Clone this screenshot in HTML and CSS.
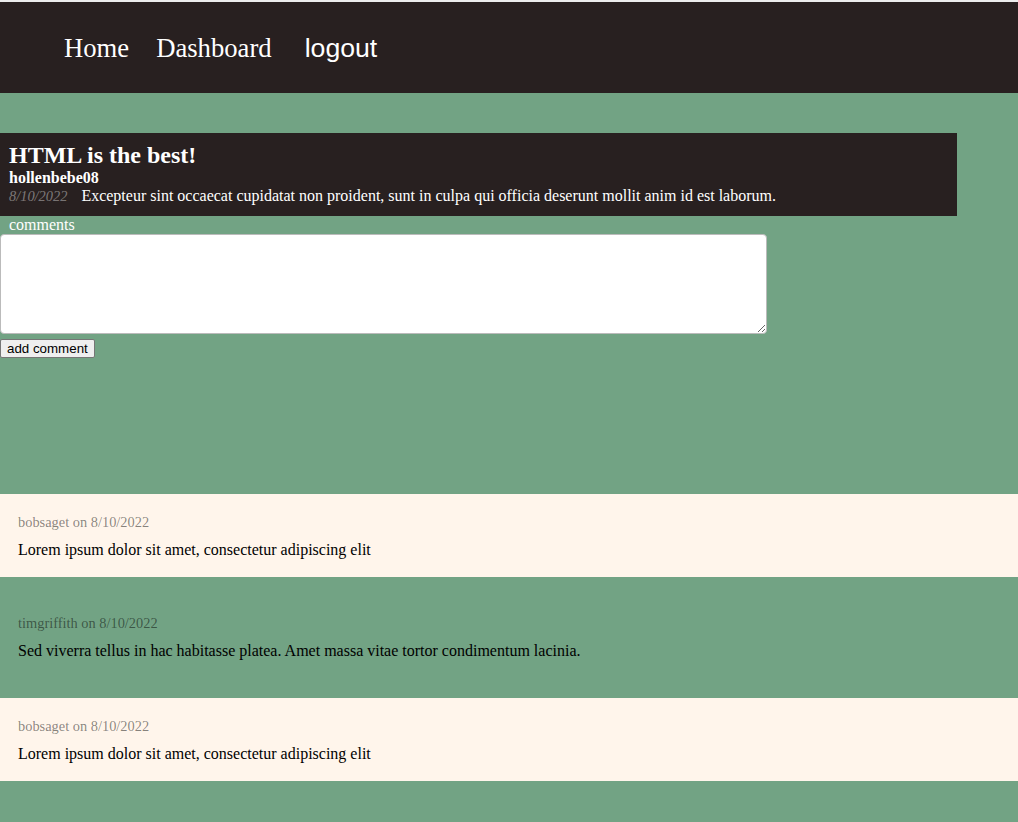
FILE: index.html
```html
<!DOCTYPE html>
<html>
<head>
<meta charset="utf-8">
<title>HTML is the best!</title>
<link rel="stylesheet" href="styles.css">
</head>
<body>
<header class="topbar">
  <nav class="nav">
    <a class="nav-link" href="#">Home</a>
    <a class="nav-link" href="#">Dashboard</a>
    <a class="nav-link nav-logout" href="#">logout</a>
  </nav>
</header>
<main class="main">
  <article class="post">
    <h2 class="post-title">HTML is the best!</h2>
    <div class="post-author">hollenbebe08</div>
    <div class="post-body"><span class="post-date">8/10/2022</span><span class="post-text">Excepteur sint occaecat cupidatat non proident, sunt in culpa qui officia deserunt mollit anim id est laborum.</span></div>
  </article>
  <form class="comment-form">
    <label class="comment-label" for="c">comments</label>
    <textarea class="comment-input" id="c"></textarea>
    <button class="comment-btn" type="button">add comment</button>
  </form>
  <section class="comments">
    <div class="comment">
      <p class="comment-meta">bobsaget on 8/10/2022</p>
      <p class="comment-text">Lorem ipsum dolor sit amet, consectetur adipiscing elit</p>
    </div>
    <div class="comment comment-alt">
      <p class="comment-meta">timgriffith on 8/10/2022</p>
      <p class="comment-text">Sed viverra tellus in hac habitasse platea. Amet massa vitae tortor condimentum lacinia.</p>
    </div>
    <div class="comment">
      <p class="comment-meta">bobsaget on 8/10/2022</p>
      <p class="comment-text">Lorem ipsum dolor sit amet, consectetur adipiscing elit</p>
    </div>
  </section>
</main>
</body>
</html>
```
FILE: styles.css
```css
html, body {
  margin: 0;
  padding: 0;
}
body {
  background: #72a384;
  font-family: "Liberation Serif", "Times New Roman", serif;
  font-size: 16px;
  min-height: 822px;
  border-top: 2px solid #ececec;
}
.topbar {
  background: #282020;
  height: 91px;
  display: flex;
  align-items: center;
}
.nav {
  display: flex;
  align-items: baseline;
  padding-left: 64px;
}
.nav-link {
  color: #fff;
  text-decoration: none;
  font-size: 26.67px;
  line-height: 30px;
  margin-right: 27px;
}
.nav-logout {
  font-family: "Liberation Sans", Arial, sans-serif;
  margin-left: 6px;
}
.main {
  padding-top: 40px;
}
.post {
  background: #282020;
  width: 94%;
  box-sizing: border-box;
  padding: 9px 9px 11px;
  color: #fff;
}
.post-title {
  margin: 0;
  font-size: 24px;
  line-height: 27px;
  font-weight: bold;
}
.post-author {
  font-weight: bold;
  line-height: 18px;
}
.post-body {
  line-height: 18px;
}
.post-date {
  font-style: italic;
  font-size: 0.9em;
  color: rgba(255, 255, 255, 0.4);
  margin-right: 14px;
}
.comment-form {
  margin: 0;
}
.comment-label {
  display: block;
  color: #fff;
  line-height: 18px;
  padding-left: 9px;
}
.comment-input {
  display: block;
  width: 767px;
  height: 100px;
  box-sizing: border-box;
  margin: 0 0 5px 0;
  border: 1px solid #bbb;
  border-radius: 4px;
  background: #fff;
}
.comment-btn {
  display: block;
  font-family: "Liberation Sans", Arial, sans-serif;
  font-size: 13.33px;
  padding: 1px 6px;
  height: 19px;
  background: #efefef;
  border: 1px solid #767676;
  border-radius: 2px;
  color: #000;
}
.comments {
  margin-top: 136px;
}
.comment {
  background: #fff5eb;
  padding: 19px 18px 17.5px;
}
.comment-alt {
  background: transparent;
  padding: 37px 18px 37.5px;
}
.comment-meta {
  margin: 0 0 8.5px;
  font-size: 0.9em;
  line-height: 18px;
  color: rgba(0, 0, 0, 0.48);
}
.comment-text {
  margin: 0;
  line-height: 20px;
  color: #000;
}
```
